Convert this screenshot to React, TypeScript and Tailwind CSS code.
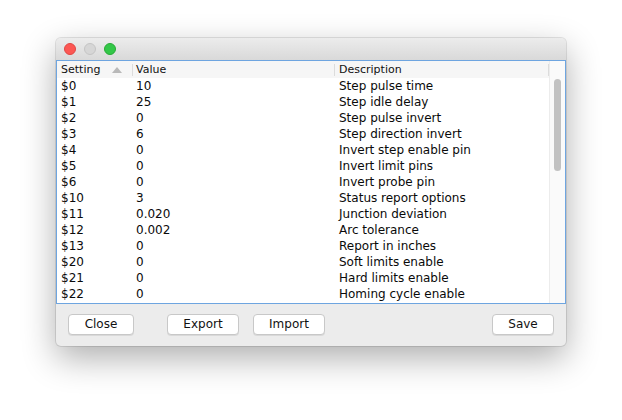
import React from "react";

const rows = [
  ["$0", "10", "Step pulse time"],
  ["$1", "25", "Step idle delay"],
  ["$2", "0", "Step pulse invert"],
  ["$3", "6", "Step direction invert"],
  ["$4", "0", "Invert step enable pin"],
  ["$5", "0", "Invert limit pins"],
  ["$6", "0", "Invert probe pin"],
  ["$10", "3", "Status report options"],
  ["$11", "0.020", "Junction deviation"],
  ["$12", "0.002", "Arc tolerance"],
  ["$13", "0", "Report in inches"],
  ["$20", "0", "Soft limits enable"],
  ["$21", "0", "Hard limits enable"],
  ["$22", "0", "Homing cycle enable"],
];

const font = { fontFamily: '"DejaVu Sans", "Liberation Sans", sans-serif' };

const Btn = ({ label, w }: { label: string; w: string }) => (
  <button
    className={`h-[21px] ${w} rounded-[4px] border border-[#c8c8c8] bg-white text-[12px] text-[#111] shadow-[0_1px_0_rgba(0,0,0,0.08)]`}
  >
    {label}
  </button>
);

export default function App() {
  return (
    <div className="w-[622px] h-[420px] bg-white pt-[38px] pl-[56px]" style={font}>
      <div className="w-[510px] h-[308px] rounded-[5px] bg-[#ececec] shadow-[0_12px_34px_rgba(0,0,0,0.32),0_0_0_1px_rgba(0,0,0,0.1)] overflow-hidden flex flex-col">
        {/* Title bar */}
        <div className="h-[22px] flex items-center gap-[8px] pl-[8px] bg-gradient-to-b from-[#ececec] to-[#d9d9d9]">
          <span className="w-[12px] h-[12px] rounded-full bg-[#fc5753] border border-[#df4744]" />
          <span className="w-[12px] h-[12px] rounded-full bg-[#d6d6d6] border border-[#c4c4c4]" />
          <span className="w-[12px] h-[12px] rounded-full bg-[#33c748] border border-[#27aa35]" />
        </div>

        {/* Table */}
        <div className="h-[244px] border border-[#6ea5e0] bg-white flex">
          <div className="flex-1 flex flex-col">
            <div className="h-[17px] flex items-center bg-[#f6f6f6] text-[11px] text-[#111]">
              <div className="w-[76px] pl-[4px] flex items-center justify-between pr-[6px] border-r border-[#dcdcdc] h-[12px]">
                <span className="leading-none">Setting</span>
                <svg width="10" height="6" viewBox="0 0 10 6" className="mr-[4px]">
                  <path d="M0 6 L5 0 L10 6 Z" fill="#b9b9b9" />
                </svg>
              </div>
              <div className="w-[202px] pl-[3px] border-r border-[#dcdcdc] h-[12px] leading-none">Value</div>
              <div className="w-[214px] pl-[4px] border-r border-[#dcdcdc] h-[12px] leading-none">Description</div>
            </div>
            <div className="flex flex-col text-[12px] text-[#0a0a0a]">
              {rows.map(([s, v, d]) => (
                <div key={s} className="h-[16px] flex items-center leading-none">
                  <div className="w-[76px] pl-[4px]">{s}</div>
                  <div className="w-[202px] pl-[3px]">{v}</div>
                  <div className="pl-[4px]">{d}</div>
                </div>
              ))}
            </div>
          </div>
          <div className="w-[16px] bg-[#fafafa] border-l border-[#ececec] pt-[18px] flex justify-center">
            <div className="w-[7px] h-[92px] rounded-full bg-[#c2c2c2]" />
          </div>
        </div>

        {/* Buttons */}
        <div className="flex-1 flex items-center pl-[12px] pr-[12px] pb-[2px]">
          <Btn label="Close" w="w-[66px]" />
          <div className="w-[33px]" />
          <Btn label="Export" w="w-[72px]" />
          <div className="w-[14px]" />
          <Btn label="Import" w="w-[72px]" />
          <div className="flex-1" />
          <Btn label="Save" w="w-[62px]" />
        </div>
      </div>
    </div>
  );
}
